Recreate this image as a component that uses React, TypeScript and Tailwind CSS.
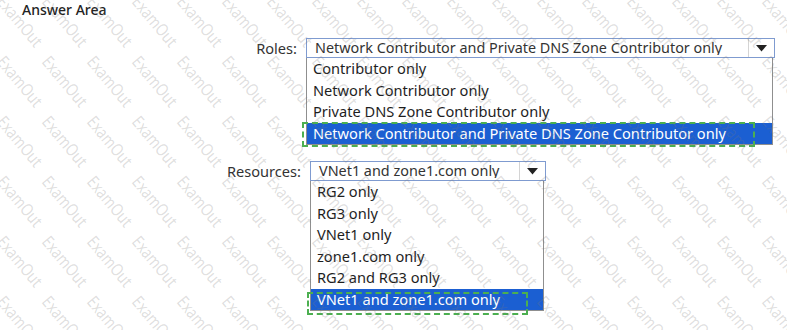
import React from 'react';

const FONT = { fontFamily: '"Noto Sans", "Open Sans", Arial, sans-serif' };

const roles = [
  'Contributor only',
  'Network Contributor only',
  'Private DNS Zone Contributor only',
  'Network Contributor and Private DNS Zone Contributor only',
];

const resources = [
  'RG2 only',
  'RG3 only',
  'VNet1 only',
  'zone1.com only',
  'RG2 and RG3 only',
  'VNet1 and zone1.com only',
];

// watermark grid
const marks: { x: number; y: number }[] = [];
for (let y = -67; y < 340; y += 60) {
  for (let x = -38; x < 800; x += 45) {
    marks.push({ x, y });
  }
}

const Arrow = () => (
  <svg width="11" height="7" viewBox="0 0 11 7">
    <path d="M0 0 L11 0 L5.5 6.5 Z" fill="#222" />
  </svg>
);

interface DropProps {
  value: string;
  items: string[];
  width: string;
}

const Dropdown: React.FC<DropProps> = ({ value, items, width }) => (
  <div className={`flex flex-col ${width}`}>
    <div className="flex h-[20px] items-center border border-[#7f9bd0] bg-white">
      <span className="flex-1 pl-[8px] text-[14.4px] leading-none text-[#333] whitespace-nowrap overflow-hidden">{value}</span>
      <div className="flex h-full w-[26px] items-center justify-center border-l border-[#d4d4d4]">
        <Arrow />
      </div>
    </div>
    <div className="mr-[2px] flex flex-col border border-t-0 border-[#8f8f8f] bg-white">
      {items.map((it, i) => {
        const sel = i === items.length - 1;
        return (
          <div
            key={it}
            className={`flex h-[21.5px] items-center pl-[6px] text-[14.6px] leading-none whitespace-nowrap ${
              sel ? 'bg-[#1b5fd2] text-white' : 'text-[#1e1e1e]'
            }`}
          >
            {it}
          </div>
        );
      })}
    </div>
  </div>
);

export default function App() {
  return (
    <div className="relative h-[330px] w-[787px] overflow-hidden bg-white" style={FONT}>
      <div className="flex flex-col">
        <div className="pl-[22px] pt-[1px] text-[14px] leading-[18px] font-medium text-[#222]">Answer Area</div>

        <div className="mt-[19px] flex items-start">
          <div className="w-[297px] pt-[1px] text-right text-[14.6px] leading-[18px] text-[#333]">Roles:</div>
          <div className="ml-[9px]">
            <Dropdown value={roles[3]} items={roles} width="w-[469px]" />
          </div>
        </div>

        <div className="mt-[16px] flex items-start">
          <div className="w-[301px] pt-[1px] text-right text-[14.6px] leading-[18px] text-[#333]">Resources:</div>
          <div className="ml-[9px]">
            <Dropdown value={resources[5]} items={resources} width="w-[236px]" />
          </div>
        </div>
      </div>

      {/* answer highlight boxes */}
      <div className="pointer-events-none absolute left-[302px] top-[122px] h-[25px] w-[453px] border-2 border-dashed border-[#4caf50]" />
      <div className="pointer-events-none absolute left-[307px] top-[292px] h-[23px] w-[221px] border-2 border-dashed border-[#4caf50]" />

      {/* watermark */}
      <svg className="pointer-events-none absolute inset-0" width="787" height="330" aria-hidden="true">
        {marks.map((m, i) => (
          <text
            key={i}
            x={0}
            y={0}
            transform={`translate(${m.x} ${m.y}) rotate(50)`}
            fontSize="17"
            fontFamily='"Noto Sans", Arial, sans-serif'
            fill="rgba(120,120,120,0.24)"
            dominantBaseline="hanging"
            textLength={60}
            lengthAdjust="spacingAndGlyphs"
          >
            ExamOut
          </text>
        ))}
      </svg>
    </div>
  );
}
